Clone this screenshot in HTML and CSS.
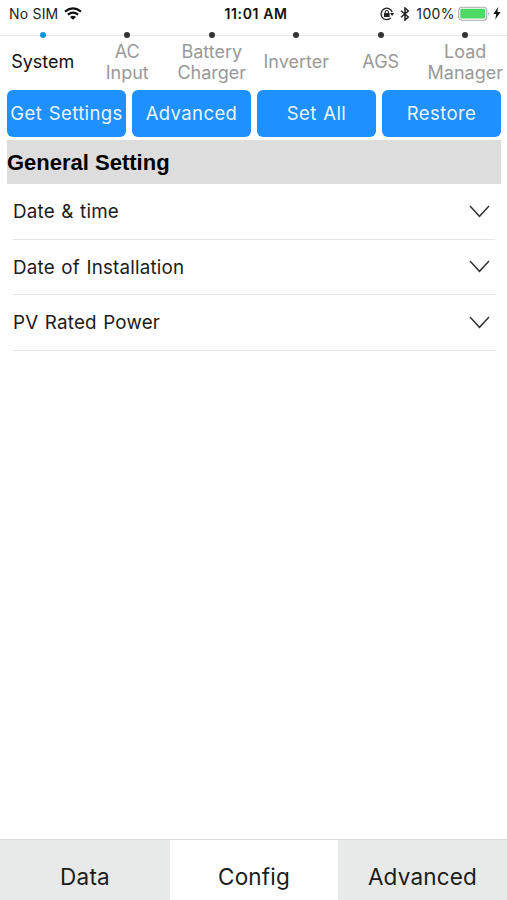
FILE: index.html
```html
<!DOCTYPE html>
<html lang="en">
<head>
<meta charset="utf-8">
<title>System configuration</title>
<link rel="stylesheet" href="styles.css">
</head>
<body>
<div class="app">
  <header class="status">
    <div class="status-left">
      <span class="carrier">No SIM</span>
      <svg class="wifi" width="18" height="13" viewBox="0 0 18 13" fill="none" stroke="#111" stroke-width="2.3">
        <path d="M1 4.6Q9-1.8 17 4.6M3.9 7.7Q9 3.5 14.1 7.7"/>
        <path d="M6 10Q9 7.3 12 10L9 12.8Z" fill="#111" stroke="none"/>
      </svg>
    </div>
    <span class="clock">11:01 AM</span>
    <div class="status-right">
      <svg width="15" height="14" viewBox="0 0 15 14" fill="none" stroke="#222" stroke-width="1.3">
        <path d="M12.2 5A5.7 5.7 0 1 0 10.8 11"/>
        <path d="M10 6H14.2L12.1 9Z" fill="#222" stroke="none"/>
        <path d="M5.2 6.5V5.1a1.6 1.6 0 0 1 3.2 0V6.5" stroke-width="1.1"/>
        <rect x="4" y="6" width="5.6" height="4" rx=".5" fill="#222" stroke="none"/>
      </svg>
      <svg class="bluetooth" width="10" height="14" viewBox="0 0 10 14" fill="none" stroke="#222" stroke-width="1.5">
        <path d="M1 3.8L8.3 10L5 13V1L8.3 4L1 10.2"/>
      </svg>
      <span class="percent">100%</span>
      <svg class="battery" width="32" height="16" viewBox="0 0 32 16">
        <rect x=".7" y="1.2" width="28" height="13" rx="3" fill="#fff" stroke="#aaa" stroke-width="1.1"/>
        <rect x="2.3" y="2.8" width="24.8" height="9.8" rx="1.3" fill="#4cd964"/>
        <path d="M30 5.5Q31.8 7.7 30 10Z" fill="#aaa"/>
      </svg>
      <svg class="bolt" width="8" height="13" viewBox="0 0 8 13"><path d="M5.2 0L.3 7H3.3L2.2 12.5L7.6 5H4.4Z" fill="#111"/></svg>
    </div>
  </header>
  <nav class="steps">
    <a class="step active"><i class="dot"></i><span>System</span></a>
    <a class="step"><i class="dot"></i><span>AC<br>Input</span></a>
    <a class="step"><i class="dot"></i><span>Battery<br>Charger</span></a>
    <a class="step"><i class="dot"></i><span>Inverter</span></a>
    <a class="step"><i class="dot"></i><span>AGS</span></a>
    <a class="step"><i class="dot"></i><span>Load<br>Manager</span></a>
  </nav>
  <main>
    <div class="actions">
      <button>Get Settings</button>
      <button>Advanced</button>
      <button>Set All</button>
      <button>Restore</button>
    </div>
    <h1>General Setting</h1>
    <ul class="rows">
      <li><span>Date &amp; time</span><svg width="21" height="13" viewBox="0 0 21 13"><path d="M1 1L10.5 11.3L20 1"/></svg></li>
      <li><span>Date of Installation</span><svg width="21" height="13" viewBox="0 0 21 13"><path d="M1 1L10.5 11.3L20 1"/></svg></li>
      <li><span>PV Rated Power</span><svg width="21" height="13" viewBox="0 0 21 13"><path d="M1 1L10.5 11.3L20 1"/></svg></li>
    </ul>
  </main>
  <footer class="tabs">
    <a>Data</a>
    <a class="current">Config</a>
    <a>Advanced</a>
  </footer>
</div>
</body>
</html>
```
FILE: styles.css
```css
* { box-sizing: border-box; }
body { margin: 0; background: #fff; color: #1b1b1b; font-family: Inter, "Liberation Sans", sans-serif; }
.app { width: 507px; height: 900px; display: flex; flex-direction: column; overflow: hidden; }

.status { height: 35px; flex: none; display: grid; grid-template-columns: 1fr auto 1fr; padding: 0 6px 8px 9px; align-items: center; font-size: 14px; color: #222; }
.status-left, .status-right { display: flex; align-items: center; }
.status-right { justify-content: flex-end; }
.carrier { letter-spacing: .2px; }
.wifi { margin-left: 6px; }
.clock { padding-left: 2px; font-weight: 600; color: #111; letter-spacing: .6px; }
.bluetooth { margin-left: 5px; }
.percent { margin-left: 6px; letter-spacing: .4px; }
.battery { margin-left: 3px; }
.bolt { margin-left: 3px; }

.steps { height: 55px; flex: none; display: grid; grid-template-columns: repeat(6, 1fr); background: linear-gradient(#e8e8e8, #e8e8e8) 0 0 / 100% 1px no-repeat; }
.step { position: relative; height: 54px; display: flex; align-items: center; justify-content: center; text-align: center; color: #999; font-size: 18px; line-height: 21.5px; }
.step span { padding-left: 1px; }
.step.active { color: #111; }
.dot { position: absolute; top: -3px; left: calc(50% - 2.6px); width: 6px; height: 6px; border-radius: 50%; background: #333; }
.active .dot { background: #1296db; }

main { flex: 1; padding: 0 6px 0 7px; }
.actions { display: grid; grid-template-columns: repeat(4, 1fr); gap: 6px; }
button { height: 47px; padding: 0 0 1px; border: 0; border-radius: 6px; background: #1e90ff; color: #e8f4ff; font: 400 18.5px Inter, sans-serif; letter-spacing: .4px; word-spacing: 1px; white-space: nowrap; }
h1 { margin: 3px 0 0; height: 44px; background: #ddd; color: #000; font: bold 22px/45px "Liberation Sans", sans-serif; }
.rows { list-style: none; margin: 0; padding: 0 6px; }
.rows li { height: 55.5px; display: flex; align-items: center; justify-content: space-between; border-bottom: 1px solid #e5e5e5; font-size: 18.8px; letter-spacing: .2px; word-spacing: 1px; }
.rows span { padding-top: 1px; }
.rows svg { margin-right: 5px; fill: none; stroke: #333; stroke-width: 1.5; }

.tabs { height: 61px; flex: none; display: grid; grid-template-columns: 170px 168px 169px; border-top: 1px solid #dedede; font-size: 22.5px; }
.tabs a { display: flex; align-items: center; justify-content: center; padding-top: 12px; background: #e8eae9; letter-spacing: .2px; }
.tabs .current { background: #fff; }
```
